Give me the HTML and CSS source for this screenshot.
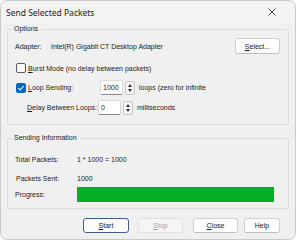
FILE: index.html
```html
<!DOCTYPE html>
<html lang="en">
<head>
    <meta charset="UTF-8">
    <title>Send Selected Packets</title>
    <link rel="stylesheet" href="styles.css">
</head>
<body>
<div class="window">
    <div class="titlebar">
        <span class="title">Send Selected Packets</span>
        <svg class="close" width="8" height="8" viewBox="0 0 8 8">
            <path d="M0.5 0.5L7.5 7.5M7.5 0.5L0.5 7.5" stroke="#333" stroke-width="0.9"/>
        </svg>
    </div>
    <div class="content">
        <fieldset class="group options">
            <legend>Options</legend>
            <div class="row adapter">
                <span class="lbl">Adapter:</span>
                <span class="adapter-name">Intel(R) Gigabit CT Desktop Adapter</span>
                <button class="btn select"><u>S</u>elect...</button>
            </div>
            <div class="row burst">
                <span class="check"></span>
                <span><u>B</u>urst Mode (no delay between packets)</span>
            </div>
            <div class="row loop">
                <span class="check on">
                    <svg width="8" height="8" viewBox="0 0 8 8"><path d="M1.3 4.2L3.2 6L6.8 2" fill="none" stroke="#fff" stroke-width="1.1"/></svg>
                </span>
                <span class="loop-lbl"><u>L</u>oop Sending:</span>
                <span class="field">1000</span>
                <span class="spin"><i class="up"></i><i class="down"></i></span>
                <span class="after">loops (zero for infinite</span>
            </div>
            <div class="row delay">
                <span class="delay-lbl"><u>D</u>elay Between Loops:</span>
                <span class="field">0</span>
                <span class="spin"><i class="up"></i><i class="down"></i></span>
                <span class="after">milliseconds</span>
            </div>
        </fieldset>

        <fieldset class="group info">
            <legend>Sending Information</legend>
            <div class="row total">
                <span class="info-lbl">Total Packets:</span>
                <span>1 * 1000 = 1000</span>
            </div>
            <div class="row sent">
                <span class="info-lbl sent-lbl">Packets Sent:</span>
                <span>1000</span>
            </div>
            <div class="row progress">
                <span class="info-lbl">Progress:</span>
                <div class="bar"></div>
            </div>
        </fieldset>
    </div>
    <div class="buttons">
        <button class="btn start"><u>S</u>tart</button>
        <button class="btn stop" disabled><u>S</u>top</button>
        <button class="btn close-btn"><u>C</u>lose</button>
        <button class="btn help">Help</button>
    </div>
</div>
</body>
</html>
```

FILE: styles.css
```css
body {
    margin: 0;
    background: #fff;
    font-family: "Liberation Sans", Arial, sans-serif;
    font-size: 7px;
    color: #1b1b1b;
}
.window {
    width: 294px;
    height: 238px;
    border: 1px solid #c9c9c9;
    border-radius: 7px;
    background: #f0f0f0;
    overflow: hidden;
}
.titlebar {
    height: 22px;
    display: flex;
    align-items: center;
    justify-content: space-between;
    padding: 0 19px 0 5px;
    background: #f3f3f3;
}
.title {
    font-family: "Noto Sans", sans-serif;
    font-size: 8.5px;
    color: #1a1a1a;
}
.content {
    padding: 1px 6px 0 6px;
}
.group {
    margin: 0;
    padding: 0 7px;
    border: 1px solid #dcdcdc;
    border-radius: 2px;
    min-width: 0;
}
.group legend {
    padding: 0 3px 0 2px;
    margin-left: -3px;
    line-height: 10px;
    color: #1b1b1b;
}
.row {
    display: flex;
    align-items: center;
    white-space: nowrap;
}
.row > * {
    flex-shrink: 0;
}
.adapter {
    height: 16px;
    margin-top: 4px;
}
.lbl {
    width: 36px;
}
.adapter-name {
    flex: 1;
}
.btn {
    font: inherit;
    color: #1b1b1b;
    background: #fdfdfd;
    border: 1px solid #d0d0d0;
    border-bottom-color: #bdbdbd;
    border-radius: 3px;
    padding: 0;
    height: 15px;
}
.select {
    width: 45px;
    height: 16px;
    margin-right: 1px;
}
.burst {
    height: 12px;
    margin-top: 8px;
    margin-left: 1px;
}
.check {
    width: 8px;
    height: 8px;
    border: 1px solid #5c5c5c;
    border-radius: 2px;
    background: #fafafa;
    margin-right: 2px;
    display: flex;
    align-items: center;
    justify-content: center;
}
.check.on {
    background: #0067c0;
    border-color: #0067c0;
}
.loop {
    height: 15px;
    margin-top: 6px;
    margin-left: 1px;
}
.loop-lbl {
    width: 72px;
}
.field {
    width: 19px;
    height: 13px;
    line-height: 13px;
    padding-left: 2px;
    background: #fff;
    border: 1px solid #dadada;
    border-bottom-color: #8a8a8a;
    border-radius: 2px;
}
.spin {
    width: 10px;
    height: 14px;
    margin-left: 2px;
    border: 1px solid #c6c6c6;
    border-radius: 2px;
    background: #f6f6f6;
    display: flex;
    flex-direction: column;
    align-items: center;
    justify-content: space-around;
    padding: 1px 0;
    box-sizing: border-box;
}
.spin i {
    width: 0;
    height: 0;
    border-left: 2.5px solid transparent;
    border-right: 2.5px solid transparent;
}
.spin .up {
    border-bottom: 3px solid #333;
}
.spin .down {
    border-top: 3px solid #333;
}
.after {
    margin-left: 4px;
}
.delay {
    height: 15px;
    margin-top: 5px;
    margin-bottom: 9px;
}
.delay-lbl {
    width: 71px;
    padding-left: 12px;
}
.info {
    margin-top: 8px;
}
.info-lbl {
    width: 62px;
}
.sent-lbl {
    padding-left: 1px;
    width: 61px;
}
.total {
    height: 12px;
    margin-top: 10px;
}
.sent {
    height: 12px;
    margin-top: 7px;
}
.progress {
    height: 15px;
    margin-top: 3px;
    margin-bottom: 6px;
}
.bar {
    width: 197px;
    height: 15px;
    background: #06b025;
}
.buttons {
    display: flex;
    padding: 9px 0 0 82px;
}
.start {
    width: 46px;
    border: 1px solid #3d5f8a;
    margin-right: 9px;
}
.stop {
    width: 45px;
    color: #a2a2a2;
    background: #f5f5f5;
    border-color: #e2e2e2;
    margin-right: 10px;
}
.close-btn {
    width: 45px;
    margin-right: 6px;
}
.help {
    width: 36px;
}
```
